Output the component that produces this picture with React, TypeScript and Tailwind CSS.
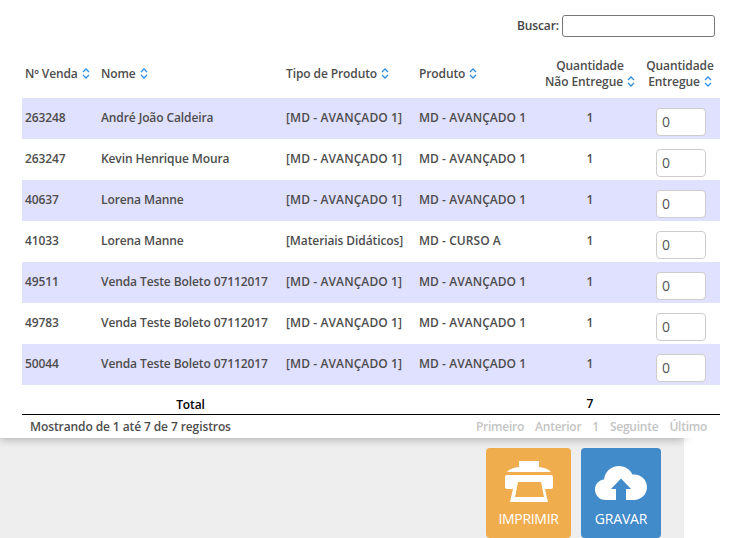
const rows = [
  ["263248", "André João Caldeira", "[MD - AVANÇADO 1]", "MD - AVANÇADO 1"],
  ["263247", "Kevin Henrique Moura", "[MD - AVANÇADO 1]", "MD - AVANÇADO 1"],
  ["40637", "Lorena Manne", "[MD - AVANÇADO 1]", "MD - AVANÇADO 1"],
  ["41033", "Lorena Manne", "[Materiais Didáticos]", "MD - CURSO A"],
  ["49511", "Venda Teste Boleto 07112017", "[MD - AVANÇADO 1]", "MD - AVANÇADO 1"],
  ["49783", "Venda Teste Boleto 07112017", "[MD - AVANÇADO 1]", "MD - AVANÇADO 1"],
  ["50044", "Venda Teste Boleto 07112017", "[MD - AVANÇADO 1]", "MD - AVANÇADO 1"],
]

function SortIcon() {
  return (
    <svg width="8" height="11" viewBox="0 0 8 11" className="ml-[4px] inline-block align-[-1px]" fill="none" stroke="#2f8ee8" strokeWidth="1.3">
      <path d="M1 4 L4 1 L7 4" />
      <path d="M1 7 L4 10 L7 7" />
    </svg>
  )
}

function PrinterIcon() {
  return (
    <svg width="48" height="41" viewBox="0 0 48 41" fill="#fff">
      <path d="M14 0 H34 V6 Q43 7 46 11 H2 Q5 7 14 6 Z" />
      <path fillRule="evenodd" d="M2 14 H46 Q48 14 48 16 V26 Q48 28 46 28 H40 L43 41 H5 L8 28 H2 Q0 28 0 26 V16 Q0 14 2 14 Z M13 21 L10 36 H39 L36 21 Z" />
    </svg>
  )
}

function CloudIcon() {
  return (
    <svg width="52" height="34" viewBox="0 0 52 34" fill="#fff">
      <path d="M11 34 C4 34 0 29 0 23.500 C0 18 4 14 9 13.500 C10 5.500 16 0 24 0 C30 0 35 3.500 37.500 8.500 C45.500 7.500 52 13.500 52 21 C52 28.500 46 34 39 34 H31 V23 H36 L26 12.500 L16 23 H21 V34 Z" />
    </svg>
  )
}

export default function App() {
  return (
    <div className="h-[538px] w-[745px] overflow-hidden bg-white font-['Open_Sans',sans-serif] text-[12px] font-semibold tracking-[-0.1px] text-[#4d4d4d]">
      <div className="relative z-10 w-[684px] bg-white shadow-[0_2px_8px_rgba(0,0,0,0.25)]">
        <div className="w-[745px] bg-white pl-[22px] pr-[25px]">
          <div className="flex h-[50px] items-start justify-end pt-[15px] pr-[5px]">
            <label className="flex items-center gap-[3px] text-[#444]">
              Buscar:
              <input className="h-[22px] w-[153px] rounded-[3px] border border-[#767676] bg-white" />
            </label>
          </div>
          <table className="w-[698px] table-fixed border-collapse">
            <colgroup>
              <col className="w-[76px]" />
              <col className="w-[185px]" />
              <col className="w-[133px]" />
              <col className="w-[124px]" />
              <col className="w-[100px]" />
              <col className="w-[80px]" />
            </colgroup>
            <thead>
              <tr className="h-[48px] leading-[16px]">
                <th className="px-[3px] text-left font-semibold whitespace-nowrap">Nº Venda<SortIcon /></th>
                <th className="px-[3px] text-left font-semibold">Nome<SortIcon /></th>
                <th className="px-[3px] text-left font-semibold">Tipo de Produto<SortIcon /></th>
                <th className="px-[3px] text-left font-semibold">Produto<SortIcon /></th>
                <th className="text-center font-semibold whitespace-nowrap">Quantidade<br />Não Entregue<SortIcon /></th>
                <th className="text-center font-semibold whitespace-nowrap">Quantidade<br />Entregue<SortIcon /></th>
              </tr>
            </thead>
            <tbody>
              {rows.map((row, i) => (
                <tr key={row[0]} className={i % 2 === 0 ? "h-[41px] bg-[#e0e0ff]" : "h-[41px] bg-white"}>
                  <td className="px-[3px] pb-[2px]">{row[0]}</td>
                  <td className="px-[3px] pb-[2px] whitespace-nowrap">{row[1]}</td>
                  <td className={row[2].startsWith("[MD") ? "px-[3px] pb-[2px] tracking-[0.1px] whitespace-nowrap" : "px-[3px] pb-[2px] tracking-[-0.1px] whitespace-nowrap"}>{row[2]}</td>
                  <td className="px-[3px] pb-[2px] tracking-[0.05px] whitespace-nowrap">{row[3]}</td>
                  <td className="pb-[2px] text-center">1</td>
                  <td className="pl-[2px] text-center">
                    <input
                      defaultValue="0"
                      className="mt-[6px] h-[28px] w-[50px] rounded-[4px] border border-[#ccc] bg-white px-[5px] text-[14px] font-normal text-[#555] align-middle"
                    />
                  </td>
                </tr>
              ))}
            </tbody>
            <tfoot>
              <tr className="h-[29px] border-b border-black text-black">
                <td colSpan={2} className="pt-[11px] pl-[76px] text-center font-semibold">Total</td>
                <td colSpan={2}></td>
                <td className="pt-[8px] text-center">7</td>
                <td></td>
              </tr>
            </tfoot>
          </table>
          <div className="flex h-[23px] items-center justify-between pt-[1px] pr-[13px] pl-[8px]">
            <span>Mostrando de 1 até 7 de 7 registros</span>
            <div className="flex gap-[11px] tracking-[-0.25px] text-[#c4c4c4]">
              <span>Primeiro</span>
              <span>Anterior</span>
              <span>1</span>
              <span>Seguinte</span>
              <span>Último</span>
            </div>
          </div>
        </div>
      </div>
      <div className="flex h-[100px] w-[684px] justify-end gap-[10px] bg-[#eeeeee] pt-[10px] pr-[23px] font-normal tracking-normal text-white">
        <button className="flex h-[90px] w-[85px] flex-col items-center rounded-[4px] bg-[#f0ad4e] pt-[13px] text-[14px] tracking-[-0.3px]">
          <PrinterIcon />
          <span className="mt-[6px]">IMPRIMIR</span>
        </button>
        <button className="flex h-[90px] w-[80px] flex-col items-center rounded-[4px] bg-[#428bca] pt-[18px] text-[14px] tracking-[-0.2px]">
          <CloudIcon />
          <span className="mt-[8px]">GRAVAR</span>
        </button>
      </div>
    </div>
  )
}
